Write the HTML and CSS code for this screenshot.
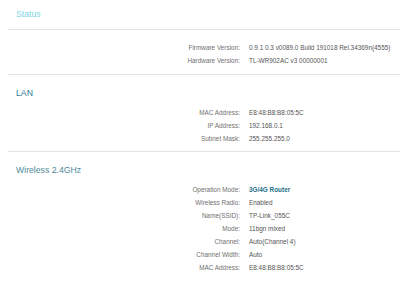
FILE: index.html
```html
<!DOCTYPE html>
<html lang="en">
<head>
  <meta charset="UTF-8">
  <meta name="viewport" content="width=device-width, initial-scale=1.0">
  <title>Status</title>
  <link rel="stylesheet" href="styles.css">
</head>
<body>
  <div class="page">
    <!-- Status -->
    <div class="section">
      <h1 class="status-title">Status</h1>
      <div class="info-list info-list-status">
        <div class="label">Firmware Version:</div>
        <div class="value">0.9.1 0.3 v0089.0 Build 191018 Rel.34369n(4555)</div>
        <div class="label">Hardware Version:</div>
        <div class="value">TL-WR902AC v3 00000001</div>
      </div>
    </div>

    <!-- LAN -->
    <div class="section">
      <h2 class="section-title section-title-lan">LAN</h2>
      <div class="info-list">
        <div class="label">MAC Address:</div>
        <div class="value">E8:48:B8:B8:05:5C</div>
        <div class="label">IP Address:</div>
        <div class="value">192.168.0.1</div>
        <div class="label">Subnet Mask:</div>
        <div class="value">255.255.255.0</div>
      </div>
    </div>

    <!-- Wireless -->
    <div class="section section-last">
      <h2 class="section-title">Wireless 2.4GHz</h2>
      <div class="info-list">
        <div class="label">Operation Mode:</div>
        <div class="value value-strong">3G/4G Router</div>
        <div class="label">Wireless Radio:</div>
        <div class="value">Enabled</div>
        <div class="label">Name(SSID):</div>
        <div class="value">TP-Link_055C</div>
        <div class="label">Mode:</div>
        <div class="value">11bgn mixed</div>
        <div class="label">Channel:</div>
        <div class="value">Auto(Channel 4)</div>
        <div class="label">Channel Width:</div>
        <div class="value">Auto</div>
        <div class="label">MAC Address:</div>
        <div class="value">E8:48:B8:B8:05:5C</div>
      </div>
    </div>
  </div>
</body>
</html>
```

FILE: styles.css
```css
/* General */
body {
  margin: 0;
  font-family: "Liberation Sans", Arial, sans-serif;
  background: #fff;
  color: #555;
}

.page {
  margin-left: 8px;
}

.section {
  border-bottom: 1px solid #e2e2e2;
}

.section-last {
  border-bottom: none;
}

/* Titles */
.status-title {
  margin: 0;
  padding-left: 8px;
  height: 29px;
  line-height: 29px;
  font-size: 8.7px;
  font-weight: normal;
  color: #7dd6e2;
  border-bottom: 1px solid #e2e2e2;
}

.section-title {
  margin: 0;
  padding: 8px 0 0 8px;
  line-height: 20px;
  font-size: 8.7px;
  font-weight: normal;
  color: #4f8a98;
}

.section-title-lan {
  color: #2a7a95;
}

/* Info rows */
.info-list {
  display: grid;
  grid-template-columns: 232px 1fr;
  grid-auto-rows: 13px;
  padding: 3px 0 6px;
  font-size: 6.4px;
  line-height: 13px;
}

.info-list-status {
  padding: 11px 0 7px;
}

.label {
  text-align: right;
  color: #707070;
}

.value {
  padding-left: 9px;
  color: #555;
  white-space: nowrap;
}

.value-strong {
  font-weight: bold;
  color: #1e6f86;
}
```
